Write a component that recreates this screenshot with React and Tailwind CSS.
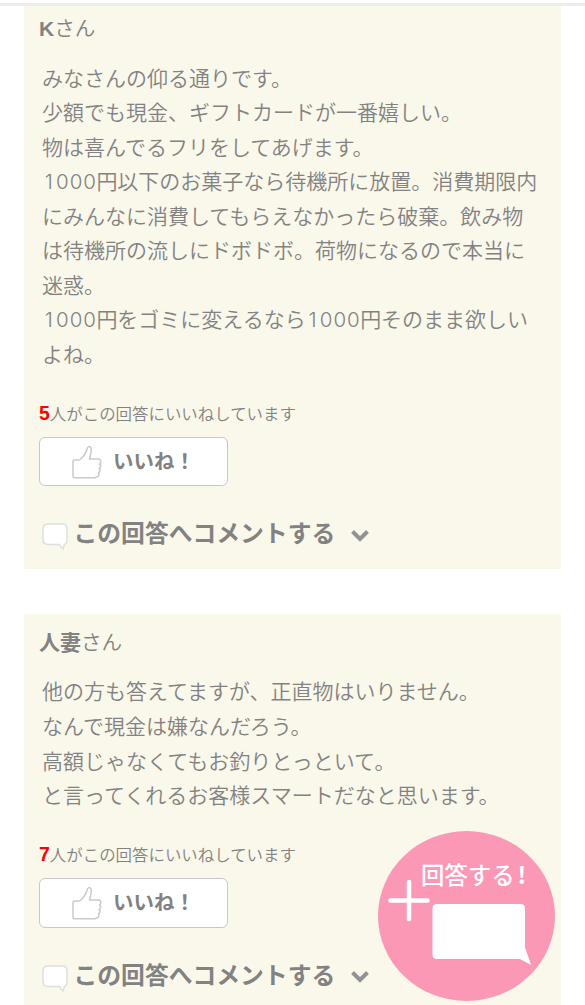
import React from "react";

const answers = [
  {
    name: "K",
    likes: 5,
    lines: [
      "みなさんの仰る通りです。",
      "少額でも現金、ギフトカードが一番嬉しい。",
      "物は喜んでるフリをしてあげます。",
      "1000円以下のお菓子なら待機所に放置。消費期限内",
      "にみんなに消費してもらえなかったら破棄。飲み物",
      "は待機所の流しにドボドボ。荷物になるので本当に",
      "迷惑。",
      "1000円をゴミに変えるなら1000円そのまま欲しい",
      "よね。",
    ],
  },
  {
    name: "人妻",
    likes: 7,
    lines: [
      "他の方も答えてますが、正直物はいりません。",
      "なんで現金は嫌なんだろう。",
      "高額じゃなくてもお釣りとっといて。",
      "と言ってくれるお客様スマートだなと思います。",
    ],
  },
];

function ThumbIcon() {
  return (
    <svg className="h-[34px] w-[30px] shrink-0" viewBox="0 0 30 34" fill="none" stroke="#cacaca" strokeWidth="1.5" strokeLinejoin="round" strokeLinecap="round">
      <path d="M1 16.500Q1 15 2.500 15H7.500C11 12.500 13.500 9 15 4.500C15.300 1 18 .9 19 2.800C20 5.500 18.500 10 17.500 14H26.500C29.300 14 29.300 18 27.500 19C29.300 20 29 22.800 27 23.500C28.800 24.500 28.300 27 26.500 27.700C27.500 29 27 31.700 24.500 32L23 32.700H2.500Q1 32.700 1 31.200Z" />
    </svg>
  );
}

function CommentIcon() {
  return (
    <svg className="mt-[6px] h-[28px] w-[28px] shrink-0" viewBox="0 0 28 28">
      <path d="M7 2H21Q26 2 26 7V17Q26 22 23.500 22.300Q22.800 24.500 22 27Q19.500 25 18.700 22.500H7Q2 22.500 2 17V7Q2 2 7 2Z" fill="#fff" stroke="#dfdfdc" strokeWidth="1.500" strokeLinejoin="round" />
    </svg>
  );
}

function BodyLine({ text }) {
  return (
    <p className="whitespace-nowrap">
      {text.split(/(\d+)/).map((part, i) =>
        /^\d+$/.test(part) ? (
          <span key={i} className="inline-flex font-['Inter'] text-[20.5px] leading-none font-light">
            {[...part].map((digit, j) => (
              <span key={j} className="w-[13.6px] text-center">{digit}</span>
            ))}
          </span>
        ) : (
          part
        )
      )}
    </p>
  );
}

function Answer({ name, likes, lines }) {
  return (
    <article className="w-[537px] bg-[#faf8eb] pt-[12px] pb-[20.5px] pl-[15px]">
      <h2 className="h-[30px] text-[20.6px] leading-[30px] font-[350]">
        <span className="font-['Liberation_Sans','Noto_Sans_CJK_JP',sans-serif] text-[21px] font-bold">{name}</span>さん
      </h2>
      <div className="mt-[17.5px] pl-[3px] text-[21px] leading-[34.55px] font-[350]">
        {lines.map((line) => (
          <BodyLine key={line} text={line} />
        ))}
      </div>
      <p className="mt-[32.5px] h-5 text-[16.45px] leading-5 font-[350]">
        <span className="font-['Liberation_Sans'] text-[19.500px] font-bold text-[#ff0000]">{likes}</span>
        人がこの回答にいいねしています
      </p>
      <button className="mt-[14px] flex h-[49.5px] w-[189px] items-center rounded-md border-[1.5px] border-[#c8c8c8] bg-white pl-[32px] text-[20.5px] leading-[30px] font-bold">
        <ThumbIcon />
        <span className="-mt-[4px] ml-[11px]">いいね！</span>
      </button>
      <div className="mt-8 flex h-[30px] items-center pl-[1.5px] text-[23.8px] leading-[30px] font-bold">
        <CommentIcon />
        <span className="-mt-[2px] ml-[5px] whitespace-nowrap">この回答へコメントする</span>
        <svg className="mt-[5px] ml-[15px] h-[14px] w-[20px]" viewBox="0 0 20 14" fill="none" stroke="#929292" strokeWidth="4">
          <path d="M2.500 2.500L10 10L17.500 2.500" />
        </svg>
      </div>
    </article>
  );
}

export default function App() {
  return (
    <div className="relative h-[1005px] w-[585px] overflow-hidden bg-white font-['Noto_Sans_CJK_JP',sans-serif] text-[#828282]">
      <main className="flex flex-col gap-[45px] pl-6">
        {answers.map((answer) => (
          <Answer key={answer.name} {...answer} />
        ))}
      </main>
      <div className="absolute inset-x-0 top-0 h-[6px] border-b-[3px] border-[#ececec] bg-white" />
      <button className="absolute top-[831px] left-[378px] h-[170px] w-[177px] rounded-[50%] bg-[#fb98b5] text-white">
        <span className="absolute top-[27px] left-[43px] flex text-[23.400px] leading-[32px] font-medium whitespace-nowrap">
          回答する<span className="ml-[3px] font-bold">!</span>
        </span>
        <svg className="absolute inset-0 h-[170px] w-[177px]" viewBox="0 0 177 170" fill="none">
          <path d="M31 51V88M12.500 69.500H49.500" stroke="#fff" strokeWidth="4.500" strokeLinecap="round" />
          <path d="M59 73H142.500Q147 73 147 77.500V116L153 134L142 128H59Q54.500 128 54.500 123.500V77.500Q54.500 73 59 73Z" fill="#fff" />
        </svg>
      </button>
    </div>
  );
}
